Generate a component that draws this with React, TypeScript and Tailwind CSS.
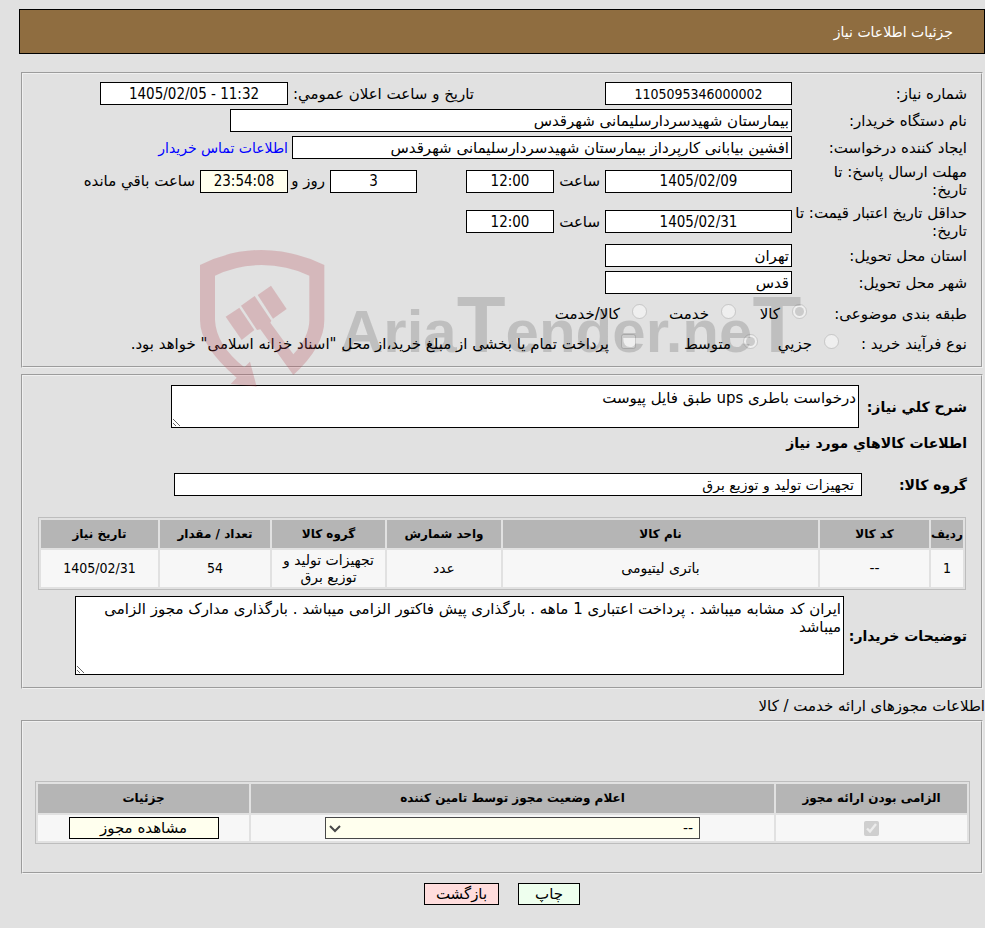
import type { ReactNode } from "react";

const boxBase =
  "h-[23px] border border-black px-[2px] leading-[19px] text-black outline-none shrink-0 rounded-none";
const box = `${boxBase} bg-white`;
const num = "text-center [font-family:'DejaVu_Sans_Condensed','DejaVu_Sans',sans-serif]";
const groove = "border-2 border-[#f0f0f0] [border-style:groove]";
const area = "resize border border-black bg-white px-[2px] py-[3px] leading-[18px] outline-none";

function Row({ label, id, h, children }: { label: string; id?: string; h: string; children: ReactNode }) {
  return (
    <div className={`flex items-center ${h}`}>
      <label htmlFor={id} className="w-[175px] shrink-0 whitespace-pre-line leading-[18px]">
        {label}
      </label>
      {children}
    </div>
  );
}

function Choice({ type, name, label, checked, className }: { type: "radio" | "checkbox"; name: string; label: string; checked?: boolean; className: string }) {
  return (
    <label className={`flex shrink-0 items-center whitespace-nowrap ${className}`}>
      <input type={type} name={name} defaultChecked={checked} disabled className="m-0 mb-[5px] h-[15px] w-[15px] shrink-0" />
      <span className="ms-[12px]">{label}</span>
    </label>
  );
}

function Watermark() {
  return (
    <div dir="ltr" aria-hidden="true" className="pointer-events-none absolute left-[167px] top-[166px] flex items-start">
      <svg width="150" height="150" viewBox="0 0 450 450" className="shrink-0" fill="#b5414a" fillOpacity="0.25">
        <path d="M30 75Q120 30 215 30Q310 30 403 75V240Q403 320 310 405L211 268L201 270L153 197L194 168L244 242L241 248L310 343Q358 290 358 240V107Q290 75 215 75Q140 75 75 107V240Q78 315 163 382L180 365L200 440L122 432L140 413Q30 320 30 240Z" />
        <path d="M107 230L148 203L193 270L155 300Z" />
        <path d="M203 165L243 137L290 207L249 236Z" />
      </svg>
      <span className="mt-[40px] whitespace-nowrap text-[60px] font-bold leading-[90px] text-black/15 [font-family:'Liberation_Sans',sans-serif]">
        Aria<span className="text-[80px]">T</span>ender.ne<span className="text-[80px]">T</span>
      </span>
    </div>
  );
}

const goods = [
  { title: "ردیف", value: "1", w: "w-[32px]" },
  { title: "کد کالا", value: "--", w: "w-[109px]" },
  { title: "نام کالا", value: "باتری لیتیومی", w: "" },
  { title: "واحد شمارش", value: "عدد", w: "w-[114px]" },
  { title: "گروه کالا", value: "تجهیزات تولید و توزیع برق", w: "w-[113px]" },
  { title: "تعداد / مقدار", value: "54", w: "w-[110px]" },
  { title: "تاریخ نیاز", value: "1405/02/31", w: "w-[117px]" },
];

const tableStyle = "border-separate border-spacing-[2px] border border-[#bdbdbd] text-center table-fixed text-[14px] leading-[17px]";
const th = "bg-[#b5b5b5] p-0 text-[12px] font-bold whitespace-nowrap";
const td = "bg-[#f7f7f7] px-1 py-0";

export default function App() {
  return (
    <div
      dir="rtl"
      className="min-h-screen bg-[#e1e1e1] pt-[9px] pb-[23px] pl-[19px] text-[15px] leading-[18px] text-black [font-family:'DejaVu_Sans',sans-serif]"
    >
      <header className="flex h-[45px] items-center border border-black bg-[#8f6d40] pr-[31px] text-[14px] text-white">
        <h1>جزئیات اطلاعات نیاز</h1>
      </header>

      <div className="mt-[18px] pl-[2px] pr-[2px]">
        <section className={`relative h-[296px] ${groove} pr-[14px] pt-[6px]`}>
          <Row label="شماره نیاز:" id="number" h="h-[27px]">
            <input id="number" readOnly value="1105095346000002" className={`${box} ${num} w-[187px] text-[14px]`} />
            <label htmlFor="announce" className="mr-[131px] w-[186px] shrink-0 whitespace-nowrap">
              تاریخ و ساعت اعلان عمومي:
            </label>
            <input id="announce" readOnly dir="ltr" value="1405/02/05 - 11:32" className={`${box} ${num} w-[188px]`} />
          </Row>
          <Row label="نام دستگاه خریدار:" id="buyer" h="h-[27px]">
            <input id="buyer" readOnly value="بیمارستان شهیدسردارسلیمانی شهرقدس" className={`${box} w-[562px]`} />
          </Row>
          <Row label="ایجاد کننده درخواست:" id="creator" h="h-[27px]">
            <input id="creator" readOnly value="افشین بیابانی کارپرداز بیمارستان شهیدسردارسلیمانی شهرقدس" className={`${box} w-[500px]`} />
            <a href="#contact" className="mr-[4px] whitespace-nowrap text-[14px] text-[#0000ff]">
              اطلاعات تماس خریدار
            </a>
          </Row>
          <Row label={"مهلت ارسال پاسخ: تا\nتاریخ:"} id="deadline" h="h-[40px]">
            <input id="deadline" readOnly value="1405/02/09" className={`${box} ${num} w-[187px]`} />
            <label htmlFor="deadline-time" className="mr-[5px] w-[46px] shrink-0">ساعت</label>
            <input id="deadline-time" readOnly value="12:00" className={`${box} ${num} w-[88px]`} />
            <input id="days" aria-label="روز" readOnly value="3" className={`${box} ${num} mr-[49px] w-[87px]`} />
            <label htmlFor="days" className="mr-[5px] w-[37px] shrink-0 whitespace-nowrap">روز و</label>
            <input id="remaining" readOnly value="23:54:08" className={`${boxBase} ${num} w-[88px] bg-[#ffffee]`} />
            <label htmlFor="remaining" className="mr-[5px] whitespace-nowrap">ساعت باقي مانده</label>
          </Row>
          <Row label={"حداقل تاریخ اعتبار قیمت: تا\nتاریخ:"} id="validity" h="h-[41px]">
            <input id="validity" readOnly value="1405/02/31" className={`${box} ${num} w-[187px]`} />
            <label htmlFor="validity-time" className="mr-[5px] w-[46px] shrink-0">ساعت</label>
            <input id="validity-time" readOnly value="12:00" className={`${box} ${num} w-[88px]`} />
          </Row>
          <Row label="استان محل تحویل:" id="province" h="h-[27px]">
            <input id="province" readOnly value="تهران" className={`${box} w-[187px]`} />
          </Row>
          <Row label="شهر محل تحویل:" id="city" h="h-[27px]">
            <input id="city" readOnly value="قدس" className={`${box} w-[187px]`} />
          </Row>
          <div className="flex h-[35px] items-center">
            <span className="w-[160px] shrink-0">طبقه بندی موضوعی:</span>
            <Choice type="radio" name="category" label="کالا" checked className="w-[71px]" />
            <Choice type="radio" name="category" label="خدمت" className="w-[89px]" />
            <Choice type="radio" name="category" label="کالا/خدمت" className="" />
          </div>
          <div className="flex h-[26px] items-center">
            <span className="w-[128px] shrink-0">نوع فرآیند خرید :</span>
            <Choice type="radio" name="process" label="جزیي" className="w-[81px]" />
            <Choice type="radio" name="process" label="متوسط" checked className="w-[122px]" />
            <Choice type="checkbox" name="treasury" label={'پرداخت تمام یا بخشی از مبلغ خرید،از محل "اسناد خزانه اسلامی" خواهد بود.'} className="" />
          </div>
          <Watermark />
        </section>

        <section className={`mt-[6px] h-[315px] ${groove} pr-[14px] pt-[9px]`}>
          <div className="flex items-center">
            <label htmlFor="summary" className="w-[108px] shrink-0 whitespace-nowrap text-[14px] font-bold">شرح کلي نیاز:</label>
            <textarea id="summary" readOnly value="درخواست باطری ups طبق فایل پیوست" className={`${area} h-[43px] w-[688px]`} />
          </div>
          <h2 className="mt-[6px] text-[14px] font-bold">اطلاعات کالاهاي مورد نیاز</h2>
          <div className="mt-[21px] flex items-center">
            <label htmlFor="group" className="w-[105px] shrink-0 text-[14px] font-bold">گروه کالا:</label>
            <input id="group" readOnly value="تجهیزات تولید و توزیع برق" className={`${box} w-[688px] pr-[7px] text-[14px]`} />
          </div>
          <div className="mt-[21px] mr-[1px] pl-[15px]">
            <table className={`${tableStyle} w-full`}>
              <thead>
                <tr className="h-[28px]">
                  {goods.map((g) => (
                    <th key={g.title} className={`${th} ${g.w}`}>{g.title}</th>
                  ))}
                </tr>
              </thead>
              <tbody>
                <tr className="h-[37px]">
                  {goods.map((g) => (
                    <td key={g.title} className={`${td} ${/^\d/.test(g.value) ? num : ""}`}>{g.value}</td>
                  ))}
                </tr>
              </tbody>
            </table>
          </div>
          <div className="mt-[6px] flex items-center">
            <label htmlFor="notes" className="w-[123px] shrink-0 whitespace-nowrap text-[14px] font-bold">توضیحات خریدار:</label>
            <textarea
              id="notes"
              readOnly
              value="ایران کد مشابه میباشد . پرداخت اعتباری 1 ماهه . بارگذاری پیش فاکتور الزامی میباشد . بارگذاری مدارک مجوز الزامی میباشد"
              className={`${area} h-[79px] w-[769px]`}
            />
          </div>
        </section>
      </div>

      <h2 className="mt-[8px]">اطلاعات مجوزهای ارائه خدمت / کالا</h2>

      <div className="mt-[5px] pl-[2px] pr-[2px]">
        <section className={`${groove} pb-[28px] pl-[12px] pr-[11px] pt-[59px]`}>
          <table className={`${tableStyle} w-full`}>
            <thead>
              <tr className="h-[29px]">
                <th className={`${th} w-[191px]`}>الزامی بودن ارائه مجوز</th>
                <th className={th}>اعلام وضعیت مجوز توسط تامین کننده</th>
                <th className={`${th} w-[211px]`}>جزئیات</th>
              </tr>
            </thead>
            <tbody>
              <tr className="h-[26px]">
                <td className={td}>
                  <input type="checkbox" aria-label="الزامی بودن ارائه مجوز" defaultChecked disabled className="m-0 block mx-auto h-[15px] w-[15px]" />
                </td>
                <td className={td}>
                  <div className="relative mx-auto w-[375px]">
                    <select aria-label="اعلام وضعیت مجوز" className="block h-[22px] w-full appearance-none rounded-none border border-[#484848] bg-[#ffffee] px-[6px] text-[14px] leading-[18px] outline-none">
                      <option>--</option>
                    </select>
                    <svg width="12" height="8" viewBox="0 0 12 8" className="pointer-events-none absolute left-[4px] top-[8px]" fill="none" stroke="#484848" strokeWidth="2">
                      <path d="M1 1L6 6L11 1" />
                    </svg>
                  </div>
                </td>
                <td className={td}>
                  <button type="button" className="block mx-auto h-[22px] w-[150px] border border-black bg-[#ffffee] text-[15px] leading-[20px]">مشاهده مجوز</button>
                </td>
              </tr>
            </tbody>
          </table>
        </section>
      </div>

      <div className="mt-[9px] flex justify-center gap-[19px]">
        <button type="button" className="h-[22px] w-[62px] border border-black bg-[#eeffee] leading-[20px]">چاپ</button>
        <button type="button" className="h-[22px] w-[75px] border border-black bg-[#ffdddd] leading-[20px]">بازگشت</button>
      </div>
    </div>
  );
}
